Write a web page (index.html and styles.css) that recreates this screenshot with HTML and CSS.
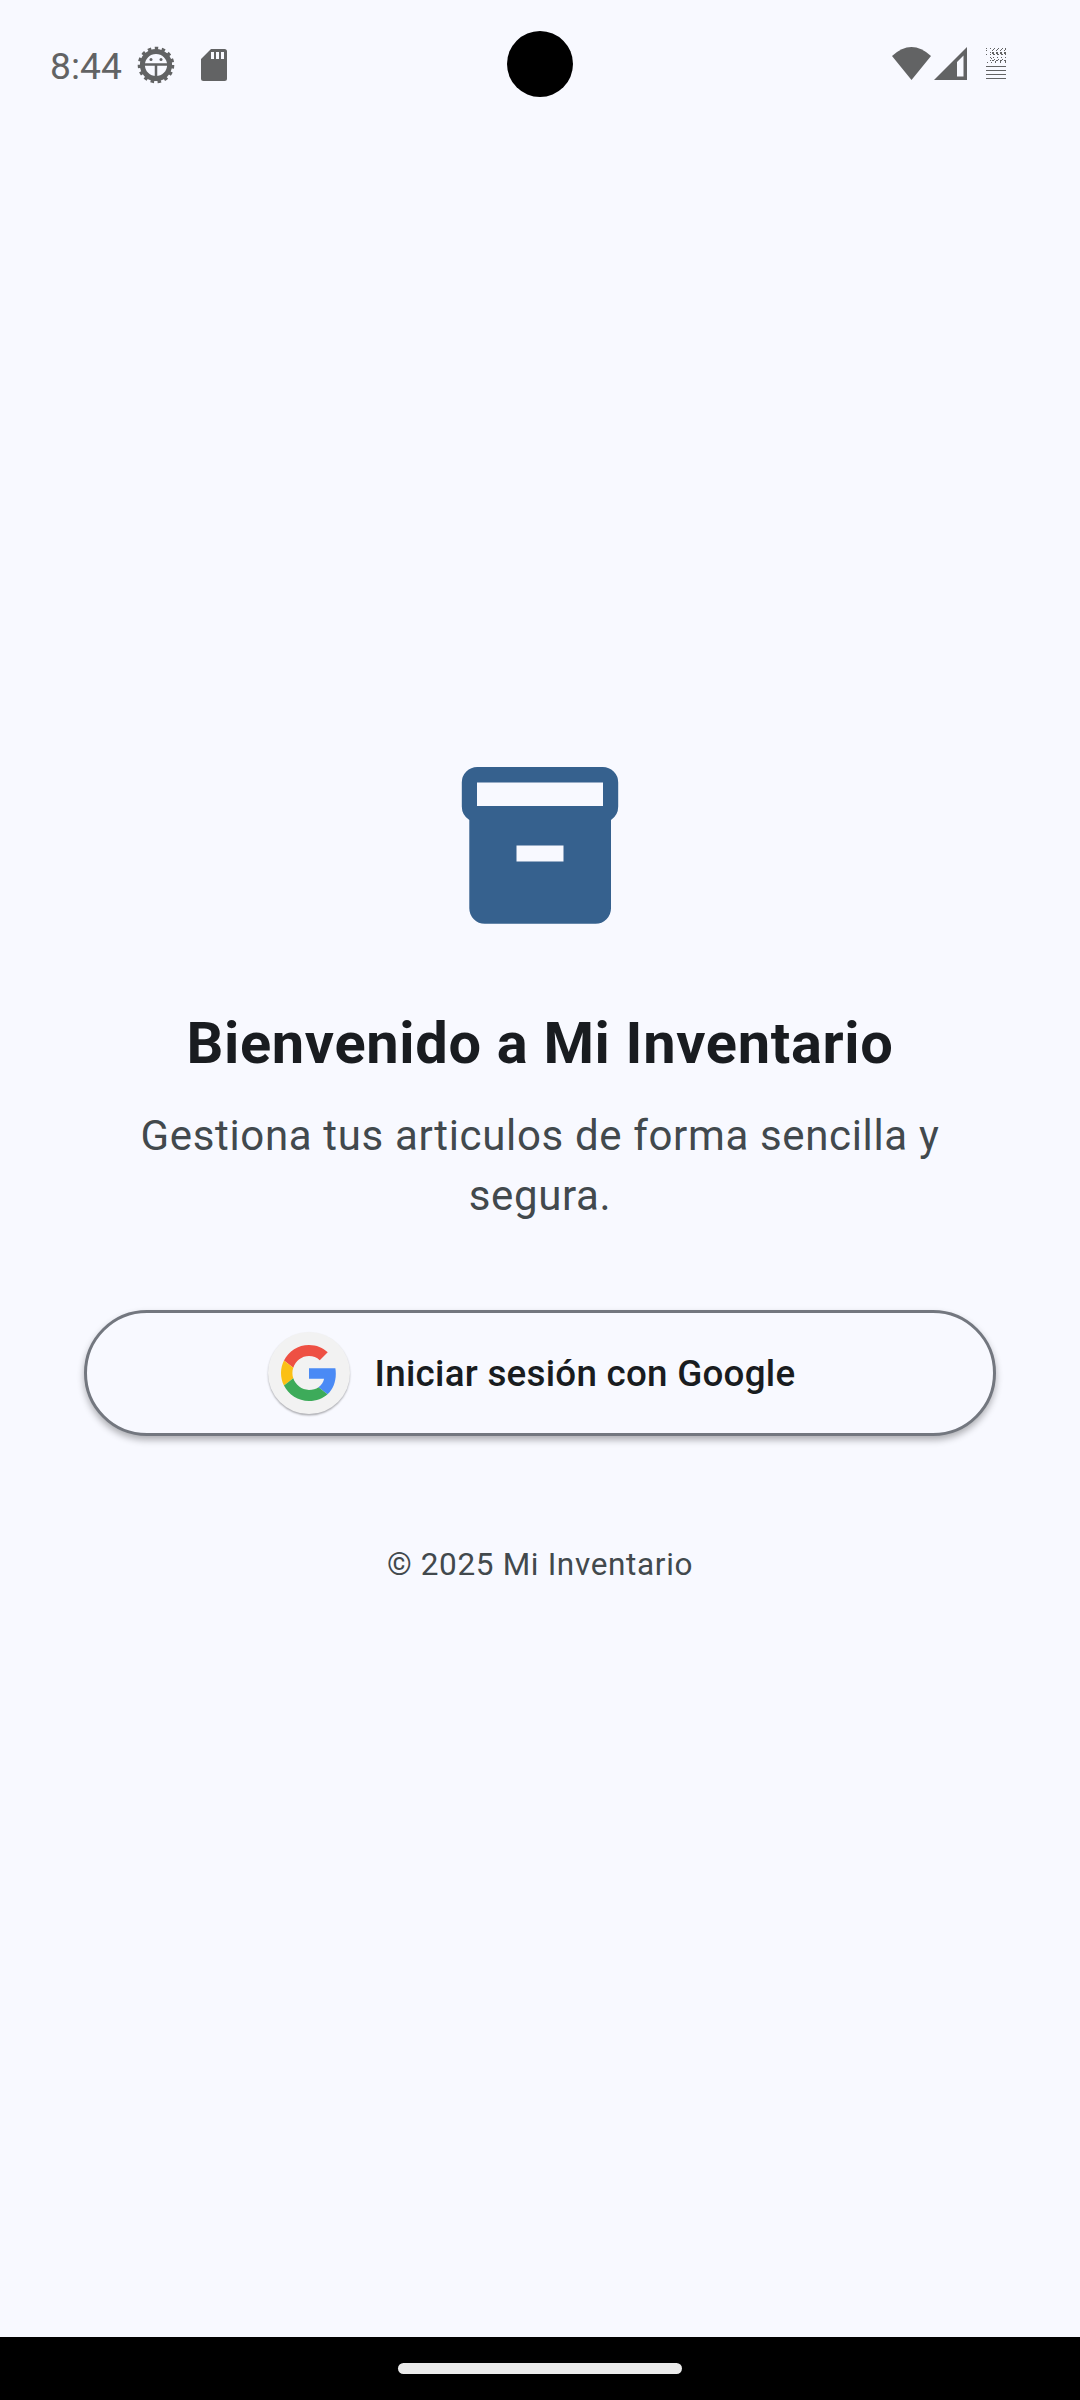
FILE: index.html
```html
<!DOCTYPE html>
<html lang="es">
<head>
<meta charset="utf-8">
<title>Mi Inventario</title>
<link rel="stylesheet" href="styles.css">
</head>
<body>
<div class="screen">
  <header class="status">
    <span class="clock">8:44</span>
    <svg class="gear" viewBox="0 0 38 38">
      <circle cx="19" cy="19" r="13.600" fill="none" stroke="currentColor" stroke-width="5"/>
      <circle cx="19" cy="19" r="16.300" fill="none" stroke="currentColor" stroke-width="4" stroke-dasharray="3.400 3.427"/>
      <path d="M7 18.500H31M19 19V31" fill="none" stroke="currentColor" stroke-width="2.500"/>
      <circle cx="14" cy="13.500" r="1.500"/><circle cx="24" cy="13.500" r="1.500"/>
    </svg>
    <svg class="sd" viewBox="0 0 26 32">
      <path fill-rule="evenodd" d="M10 0H23.500Q26 0 26 2.500V29.500Q26 32 23.500 32H2.500Q0 32 0 29.500V10ZM10 3V10H13V3ZM15 3V10H18V3ZM20 3V10H23V3Z"/>
    </svg>
    <span class="camera"></span>
    <svg class="wifi" viewBox="0 0 39 33"><path d="M0 9Q19.500 -9 39 9L19.500 33Z"/></svg>
    <svg class="signal" viewBox="0 0 33 33"><path fill-rule="evenodd" d="M0 33L33 0V33ZM23 15V29.500H29.500V8.500Z"/></svg>
    <svg class="battery" viewBox="0 0 20 32">
      <path d="M0 18h20v1H0zM0 22h20v1H0zM0 26h20v1H0zM0 30h20v1H0z"/>
      <path d="M0 .5h1M0 2.500h1M0 6.500h1M1 14.500h1M4 .5h1M8 .5h1M12 .5h1M16 .5h1M19 .5h1M7 1.500h1M11 1.500h1M15 1.500h1M19 1.500h1M6 2.500h1M10 2.500h1M14 2.500h1M18 2.500h1M4 4.500h1M4 6.500h1M4 9.500h1M4 12.500h1M5 10.500h1M5 14.500h1M9 14.500h1M14 14.500h1M19 14.500h1M7 9.500h1M11 9.500h1M15 9.500h1M19 9.500h1M8 11.500h1M12 11.500h1M16 11.500h1M6 12.500h2M10 12.500h2M14 12.500h2M18 12.500h2M9 13.500h1M14 13.500h1M19 13.500h1" fill="none" stroke="currentColor"/>
      <path d="M6 4.500h2M10 4.500h2M14 4.500h2M18 4.500h2M6 5.500h2M10 5.500h2M14 5.500h2M18 5.500h2M7 6.500h2M11 6.500h2M15 6.500h2M19 6.500h1" fill="none" stroke="currentColor"/>
    </svg>
  </header>
  <main class="content">
    <svg class="box" viewBox="0 0 158 158">
      <path fill-rule="evenodd" d="M16.300 0H141.700A15.500 15.500 0 0 1 157.200 15.500V39.500Q157.200 48 150 53V141.300A15.500 15.500 0 0 1 134.500 156.800H23.800A15.500 15.500 0 0 1 8.300 141.300V53Q.8 48 .8 39.500V15.500A15.500 15.500 0 0 1 16.300 0ZM16 15.500V39H142V15.500ZM55.500 78.500V94.500H102.500V78.500Z"/>
    </svg>
    <h1 class="title">Bienvenido a Mi Inventario</h1>
    <p class="subtitle">Gestiona tus articulos de forma sencilla y segura.</p>
    <button class="google">
      <span class="badge">
        <svg class="g" viewBox="0 0 48 48">
          <path fill="#ee5043" d="M24 9.500c3.540 0 6.710 1.220 9.210 3.600l6.850-6.850C35.900 2.380 30.470 0 24 0 14.620 0 6.510 5.380 2.560 13.220l7.980 6.190C12.430 13.720 17.740 9.500 24 9.500z"/>
          <path fill="#4a8af5" d="M46.980 24.550c0-1.570-.15-3.090-.38-4.550H24v9.020h12.940c-.58 2.960-2.260 5.480-4.780 7.180l7.730 6c4.510-4.180 7.090-10.360 7.090-17.650z"/>
          <path fill="#fbc014" d="M10.530 28.590c-.48-1.450-.76-2.990-.76-4.590s.27-3.140.76-4.590l-7.980-6.190C.92 16.460 0 20.120 0 24s.92 7.540 2.560 10.780z"/>
          <path fill="#3dab5a" d="M24 48c6.480 0 11.930-2.130 15.890-5.810l-7.730-6c-2.150 1.450-4.920 2.300-8.160 2.300-6.260 0-11.570-4.220-13.470-9.910l-7.980 6.190C6.510 42.620 14.620 48 24 48z"/>
        </svg>
      </span>
      <span class="label">Iniciar sesión con Google</span>
    </button>
    <p class="copyright">© 2025 Mi Inventario</p>
  </main>
  <footer class="nav"><span class="handle"></span></footer>
</div>
</body>
</html>
```
FILE: styles.css
```css
* { box-sizing: border-box; }
body { margin: 0; }
.screen { display: flex; flex-direction: column; width: 1080px; height: 2400px; background: #f8f9ff; font-family: Roboto, sans-serif; }
.status { position: relative; display: flex; align-items: flex-start; height: 128px; padding-left: 50px; color: #626364; }
.status svg { flex: none; fill: currentColor; }
.clock { width: 87px; margin-top: 45px; font-size: 37.25px; line-height: 43px; }
.gear { width: 38px; height: 38px; margin-top: 46px; }
.sd { width: 26px; height: 32px; margin: 49px 0 0 26px; }
.camera { position: absolute; left: 507px; top: 31px; width: 66px; height: 66px; border-radius: 50%; background: #000; }
.wifi { width: 39px; height: 33px; margin: 47px 0 0 auto; }
.signal { width: 33px; height: 33px; margin: 47px 0 0 3px; }
.battery { width: 20px; height: 32px; margin: 48px 74px 0 19px; }
.content { flex: 1; display: flex; flex-direction: column; align-items: center; padding: 639px 84px 0; }
.box { width: 158px; height: 158px; fill: #36618e; }
.title { margin: 83px 0 0; font-size: 57.75px; line-height: 70px; font-weight: 700; letter-spacing: .68px; color: #191c20; white-space: nowrap; }
.subtitle { margin: 28px 0 0; width: 840px; font-size: 42px; line-height: 60px; letter-spacing: .65px; color: #42494d; text-align: center; }
.google { display: flex; align-items: center; justify-content: center; width: 912px; height: 126px; margin: 84px 0 0; padding: 0 17px 0 0; border: 3px solid #73777f; border-radius: 63px; background: #f8f9ff; box-shadow: 0 4px 7px rgba(0,0,0,.3); }
.badge { display: flex; align-items: center; justify-content: center; width: 82px; height: 82px; margin-right: 25px; border-radius: 50%; background: #f2f2f2; box-shadow: 0 1.5px 2px rgba(0,0,0,.3); }
.g { width: 56px; height: 56px; }
.label { padding-top: 2px; font: 500 36.75px/44px Roboto, sans-serif; letter-spacing: .26px; color: #191c20; }
.copyright { margin: 108px 0 0; font-size: 31.5px; line-height: 42px; letter-spacing: .66px; color: #42494d; }
.nav { display: flex; justify-content: center; height: 63px; padding-top: 26px; background: #000; }
.handle { width: 284px; height: 11px; border-radius: 6px; background: #ebebeb; }
```
